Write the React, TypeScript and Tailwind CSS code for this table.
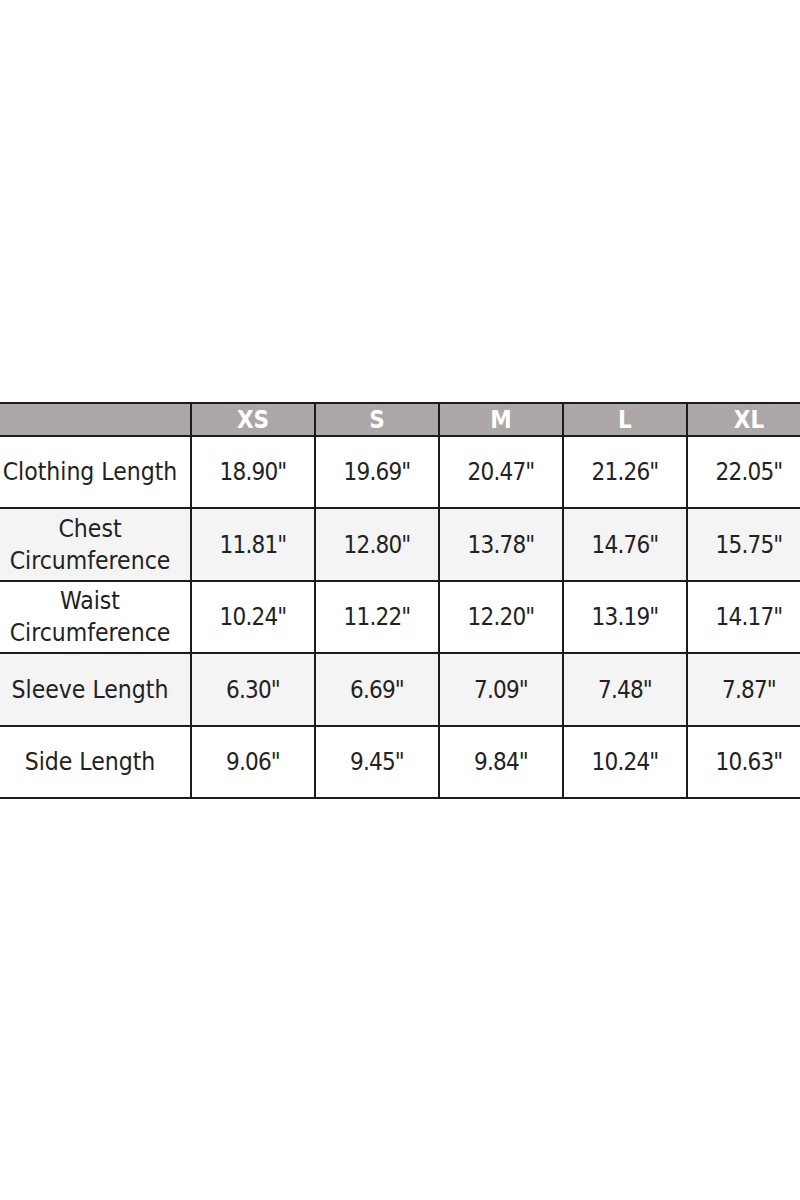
const sizes = ['XS', 'S', 'M', 'L', 'XL'];

const rows: { label: string[]; values: string[] }[] = [
  { label: ['Clothing Length'], values: ['18.90"', '19.69"', '20.47"', '21.26"', '22.05"'] },
  { label: ['Chest', 'Circumference'], values: ['11.81"', '12.80"', '13.78"', '14.76"', '15.75"'] },
  { label: ['Waist', 'Circumference'], values: ['10.24"', '11.22"', '12.20"', '13.19"', '14.17"'] },
  { label: ['Sleeve Length'], values: ['6.30"', '6.69"', '7.09"', '7.48"', '7.87"'] },
  { label: ['Side Length'], values: ['9.06"', '9.45"', '9.84"', '10.24"', '10.63"'] },
];

const rowHeights = ['h-[72px]', 'h-[73px]', 'h-[72px]', 'h-[73px]', 'h-[72px]'];

export default function App() {
  return (
    <div
      className="w-[800px] h-[1200px] bg-white overflow-hidden pt-[402px]"
      style={{ fontFamily: '"DejaVu Sans Condensed", "DejaVu Sans", sans-serif' }}
    >
      <table className="table-fixed border-collapse ml-[-12px] w-[822px] text-[#222]">
        <colgroup>
          <col className="w-[202px]" />
          <col className="w-[124px]" />
          <col className="w-[124px]" />
          <col className="w-[124px]" />
          <col className="w-[124px]" />
          <col className="w-[124px]" />
        </colgroup>
        <thead>
          <tr className="h-[33px] bg-[#aca7a6]">
            <th className="border-2 border-[#1c1c1c] p-0" />
            {sizes.map((s) => (
              <th
                key={s}
                className="border-2 border-[#1c1c1c] p-0 text-[24px] font-bold text-white leading-none text-center"
              >
                {s}
              </th>
            ))}
          </tr>
        </thead>
        <tbody>
          {rows.map((row, i) => (
            <tr key={row.label.join(' ')} className={`${rowHeights[i]} ${i % 2 === 1 ? 'bg-[#f4f4f4]' : 'bg-white'}`}>
              <td className="border-2 border-[#1c1c1c] p-0 text-center text-[24.5px] leading-[32px] whitespace-nowrap">
                {row.label.map((l) => (
                  <div key={l}>{l}</div>
                ))}
              </td>
              {row.values.map((v, j) => (
                <td key={j} className="border-2 border-[#1c1c1c] p-0 text-center text-[24px] tracking-[-0.8px]">
                  {v}
                </td>
              ))}
            </tr>
          ))}
        </tbody>
      </table>
    </div>
  );
}
